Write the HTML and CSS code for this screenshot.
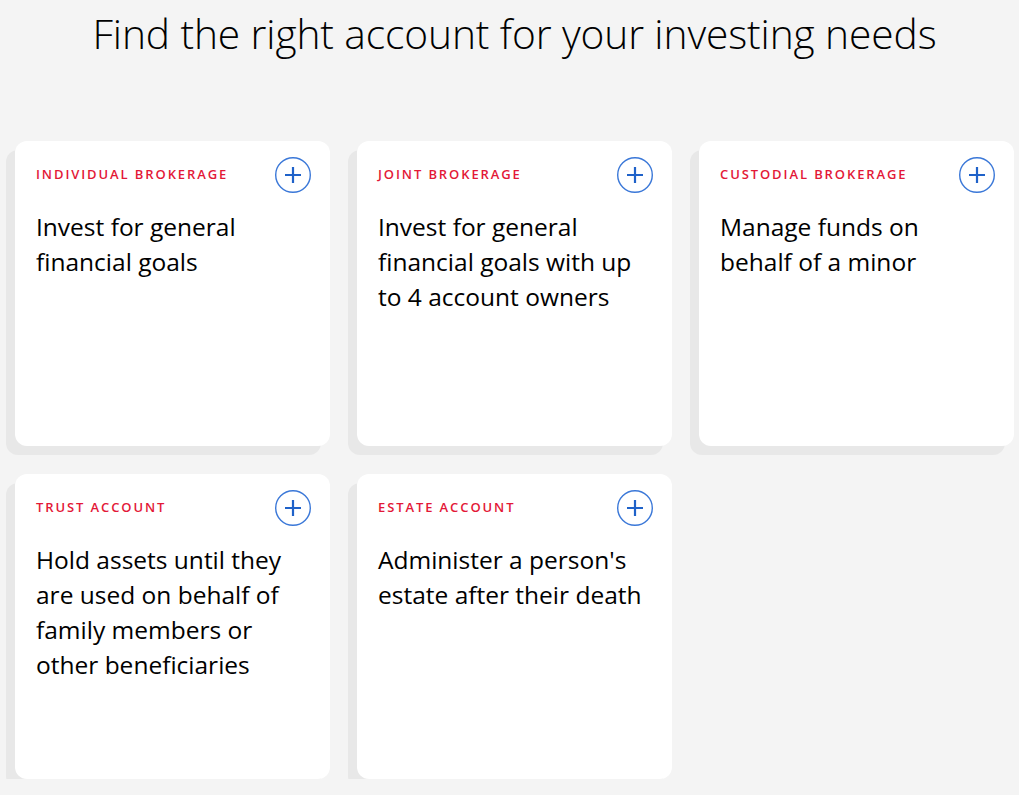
FILE: index.html
```html
<!DOCTYPE html>
<html lang="en">
<head>
  <meta charset="UTF-8">
  <title>Find the right account</title>
  <link rel="stylesheet" href="styles.css">
</head>
<body>

<h1 class="titulo">Find the right account for your investing needs</h1>

<div class="cuentas">
  <div class="cuenta">
    <div class="cuenta-top">
      <span class="cuenta-tipo">Individual Brokerage</span>
      <button class="cuenta-mas" aria-label="More">
        <svg width="38" height="38" viewBox="0 0 38 38"><circle cx="19" cy="19" r="17.3" fill="none" stroke="#3b78d8" stroke-width="1.4"/><path d="M19 11v16M11 19h16" stroke="#1f62c9" stroke-width="2.2"/></svg>
      </button>
    </div>
    <p class="cuenta-texto">Invest for general financial goals</p>
  </div>

  <div class="cuenta">
    <div class="cuenta-top">
      <span class="cuenta-tipo">Joint Brokerage</span>
      <button class="cuenta-mas" aria-label="More">
        <svg width="38" height="38" viewBox="0 0 38 38"><circle cx="19" cy="19" r="17.3" fill="none" stroke="#3b78d8" stroke-width="1.4"/><path d="M19 11v16M11 19h16" stroke="#1f62c9" stroke-width="2.2"/></svg>
      </button>
    </div>
    <p class="cuenta-texto">Invest for general financial goals with up to 4 account owners</p>
  </div>

  <div class="cuenta">
    <div class="cuenta-top">
      <span class="cuenta-tipo">Custodial Brokerage</span>
      <button class="cuenta-mas" aria-label="More">
        <svg width="38" height="38" viewBox="0 0 38 38"><circle cx="19" cy="19" r="17.3" fill="none" stroke="#3b78d8" stroke-width="1.4"/><path d="M19 11v16M11 19h16" stroke="#1f62c9" stroke-width="2.2"/></svg>
      </button>
    </div>
    <p class="cuenta-texto">Manage funds on behalf of a minor</p>
  </div>

  <div class="cuenta">
    <div class="cuenta-top">
      <span class="cuenta-tipo">Trust Account</span>
      <button class="cuenta-mas" aria-label="More">
        <svg width="38" height="38" viewBox="0 0 38 38"><circle cx="19" cy="19" r="17.3" fill="none" stroke="#3b78d8" stroke-width="1.4"/><path d="M19 11v16M11 19h16" stroke="#1f62c9" stroke-width="2.2"/></svg>
      </button>
    </div>
    <p class="cuenta-texto">Hold assets until they are used on behalf of family members or other beneficiaries</p>
  </div>

  <div class="cuenta">
    <div class="cuenta-top">
      <span class="cuenta-tipo">Estate Account</span>
      <button class="cuenta-mas" aria-label="More">
        <svg width="38" height="38" viewBox="0 0 38 38"><circle cx="19" cy="19" r="17.3" fill="none" stroke="#3b78d8" stroke-width="1.4"/><path d="M19 11v16M11 19h16" stroke="#1f62c9" stroke-width="2.2"/></svg>
      </button>
    </div>
    <p class="cuenta-texto">Administer a person's estate after their death</p>
  </div>
</div>

</body>
</html>
```

FILE: styles.css
```css
/* Selector de cuentas */
body {
  font-family: "Open Sans", Arial, sans-serif;
  margin: 0;
  background-color: #f4f4f4;
  color: #000;
}
.titulo {
  margin: 0;
  padding: 7px 0 0 10px;
  font-size: 40.7px;
  font-weight: 300;
  line-height: 52px;
  text-align: center;
  letter-spacing: -0.1px;
}
.cuentas {
  display: grid;
  grid-template-columns: repeat(3, 315px);
  grid-auto-rows: 305px;
  column-gap: 27px;
  row-gap: 28px;
  padding: 82px 0 0 15px;
}
.cuenta {
  background-color: #fff;
  border-radius: 12px;
  box-shadow: -9px 9px 0 #e8e8e8;
  padding: 15px 18px 0 21px;
}
.cuenta-top {
  display: flex;
  justify-content: space-between;
  align-items: center;
}
.cuenta-tipo {
  color: #e31837;
  font-size: 13px;
  font-weight: 600;
  letter-spacing: 1.9px;
  text-transform: uppercase;
  margin-top: -2px;
}
.cuenta-mas {
  border: none;
  background: none;
  padding: 0;
  width: 38px;
  height: 38px;
  cursor: pointer;
}
.cuenta-mas svg {
  display: block;
}
.cuenta-texto {
  margin: 15px 0 0;
  font-size: 24.5px;
  line-height: 35px;
  max-width: 265px;
}
```
